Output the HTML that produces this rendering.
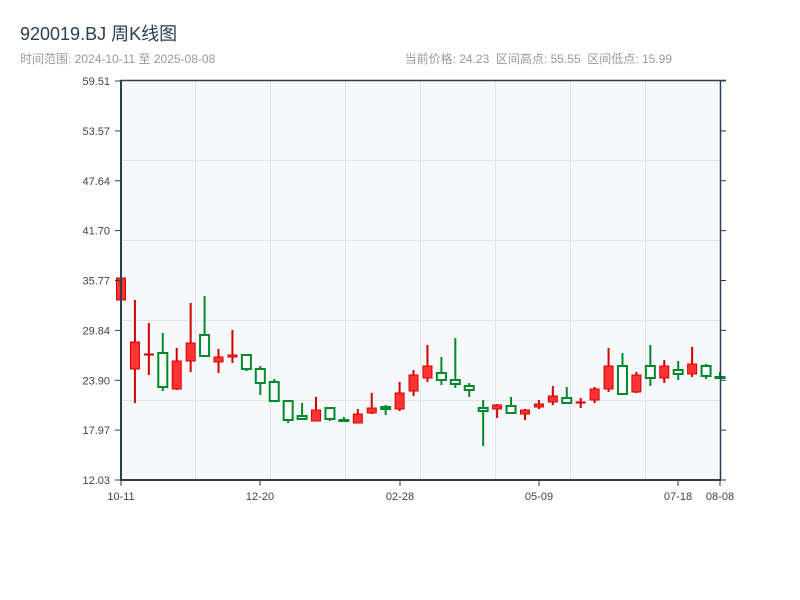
<!DOCTYPE html>
<html><head><meta charset="utf-8"><style>
body{margin:0;background:#fff;width:800px;height:600px;overflow:hidden;font-family:"Liberation Sans","Noto Sans CJK SC",sans-serif}
text{white-space:pre}
</style></head><body>
<svg id="s" width="800" height="600" xmlns="http://www.w3.org/2000/svg" style="position:absolute;left:0;top:0">
<text x="20" y="40" font-size="18" fill="#2c3e50" font-family="Liberation Sans,Noto Sans CJK SC,sans-serif">920019.BJ 周K线图</text>
<text x="20" y="63" font-size="12" fill="#999" font-family="Liberation Sans,Noto Sans CJK SC,sans-serif">时间范围: 2024-10-11 至 2025-08-08</text>
<text x="672" y="63" font-size="12" fill="#999" text-anchor="end" font-family="Liberation Sans,Noto Sans CJK SC,sans-serif">当前价格: 24.23&#160;&#160;区间高点: 55.55&#160;&#160;区间低点: 15.99</text>
<rect x="121" y="80" width="599" height="400" fill="#f7f8fa"/>
<g stroke="#e1e4e8" stroke-width="1">
<line x1="195.5" y1="80" x2="195.5" y2="480"/><line x1="270.5" y1="80" x2="270.5" y2="480"/><line x1="345.5" y1="80" x2="345.5" y2="480"/><line x1="420.5" y1="80" x2="420.5" y2="480"/><line x1="495.5" y1="80" x2="495.5" y2="480"/><line x1="570.5" y1="80" x2="570.5" y2="480"/><line x1="645.5" y1="80" x2="645.5" y2="480"/>
<line x1="121" y1="160.5" x2="720" y2="160.5"/><line x1="121" y1="240.5" x2="720" y2="240.5"/><line x1="121" y1="320.5" x2="720" y2="320.5"/><line x1="121" y1="400.5" x2="720" y2="400.5"/>
</g>
<g id="c"></g>
<g stroke="#2c3e50" fill="none">
<line x1="121" y1="80.5" x2="726" y2="80.5" stroke-width="1.5"/>
<line x1="121" y1="80" x2="121" y2="481" stroke-width="2"/>
<line x1="121" y1="480" x2="721" y2="480" stroke-width="2"/>
<line x1="720.5" y1="80" x2="720.5" y2="480" stroke-width="1.5"/>
</g>
<g id="ax" stroke="#2c3e50" stroke-width="1"></g>
<g id="lb" font-size="11" fill="#444" font-family="Liberation Sans,sans-serif"></g>
</svg>
<script>
var NS="http://www.w3.org/2000/svg";
function el(p,t,a,tx){var e=document.createElementNS(NS,t);for(var k in a)e.setAttribute(k,a[k]);if(tx)e.textContent=tx;document.getElementById(p).appendChild(e);}
var yl=["59.51","53.57","47.64","41.70","35.77","29.84","23.90","17.97","12.03"];
for(var i=0;i<9;i++){var y=81+i*49.875;el("ax","line",{x1:115,y1:y,x2:121,y2:y});el("ax","line",{x1:720,y1:y,x2:726,y2:y});el("lb","text",{x:110,y:y+4,"text-anchor":"end"},yl[i]);}
var xl=[[121,"10-11"],[260,"12-20"],[400,"02-28"],[539,"05-09"],[678,"07-18"],[720,"08-08"]];
xl.forEach(function(a){el("ax","line",{x1:a[0],y1:480,x2:a[0],y2:486});el("lb","text",{x:a[0],y:500,"text-anchor":"middle"},a[1]);});
var d=[["r",278,300,278,300],["r",342,369,300,403],["r",354,355,323,375],["g",353,387,333,391],["r",361,389,348,390],["r",343,361,303,372],["g",335,356,296,357],["r",357,362,349,373],["r",355,357,330,363],["g",355,369,354,371],["g",369,383,366,395],["g",382,401,379,402],["g",401,420,401,423],["g",416,419,403,420],["r",410,421,397,421],["g",408,419,407,421],["g",420,421,417,422],["r",414,423,409,423],["r",408,413,393,414],["g",407,409,405,415],["r",393,409,382,411],["r",375,391,370,396],["r",366,378,345,382],["g",373,380,357,385],["g",380,384,338,388],["g",386,390,383,397],["g",408,411,400,446],["r",405,409,404,418],["g",406,413,397,413],["r",410,414,409,420],["r",404,407,400,409],["r",396,402,386,405],["g",398,403,387,404],["r",402,403,398,408],["r",389,400,387,403],["r",366,389,348,392],["g",366,394,353,395],["r",375,392,372,393],["g",366,378,345,386],["r",366,378,360,383],["g",370,374,361,380],["r",364,374,347,377],["g",366,376,364,379],["g",377,378,372,379]];
d.forEach(function(c,i){var x=121+i*13.93;var col=c[0]=="r"?"#d40000":"#00882e";
el("c","line",{x1:x,y1:c[3],x2:x,y2:c[4],stroke:col,"stroke-width":2});
var h=Math.max(c[2]-c[1],1);
el("c","rect",{x:x-4.5,y:c[1],width:9,height:h,fill:c[0]=="r"?"#ff3333":"#fff",stroke:col,"stroke-width":c[0]=="r"?1:2});});
</script>
</body></html>
